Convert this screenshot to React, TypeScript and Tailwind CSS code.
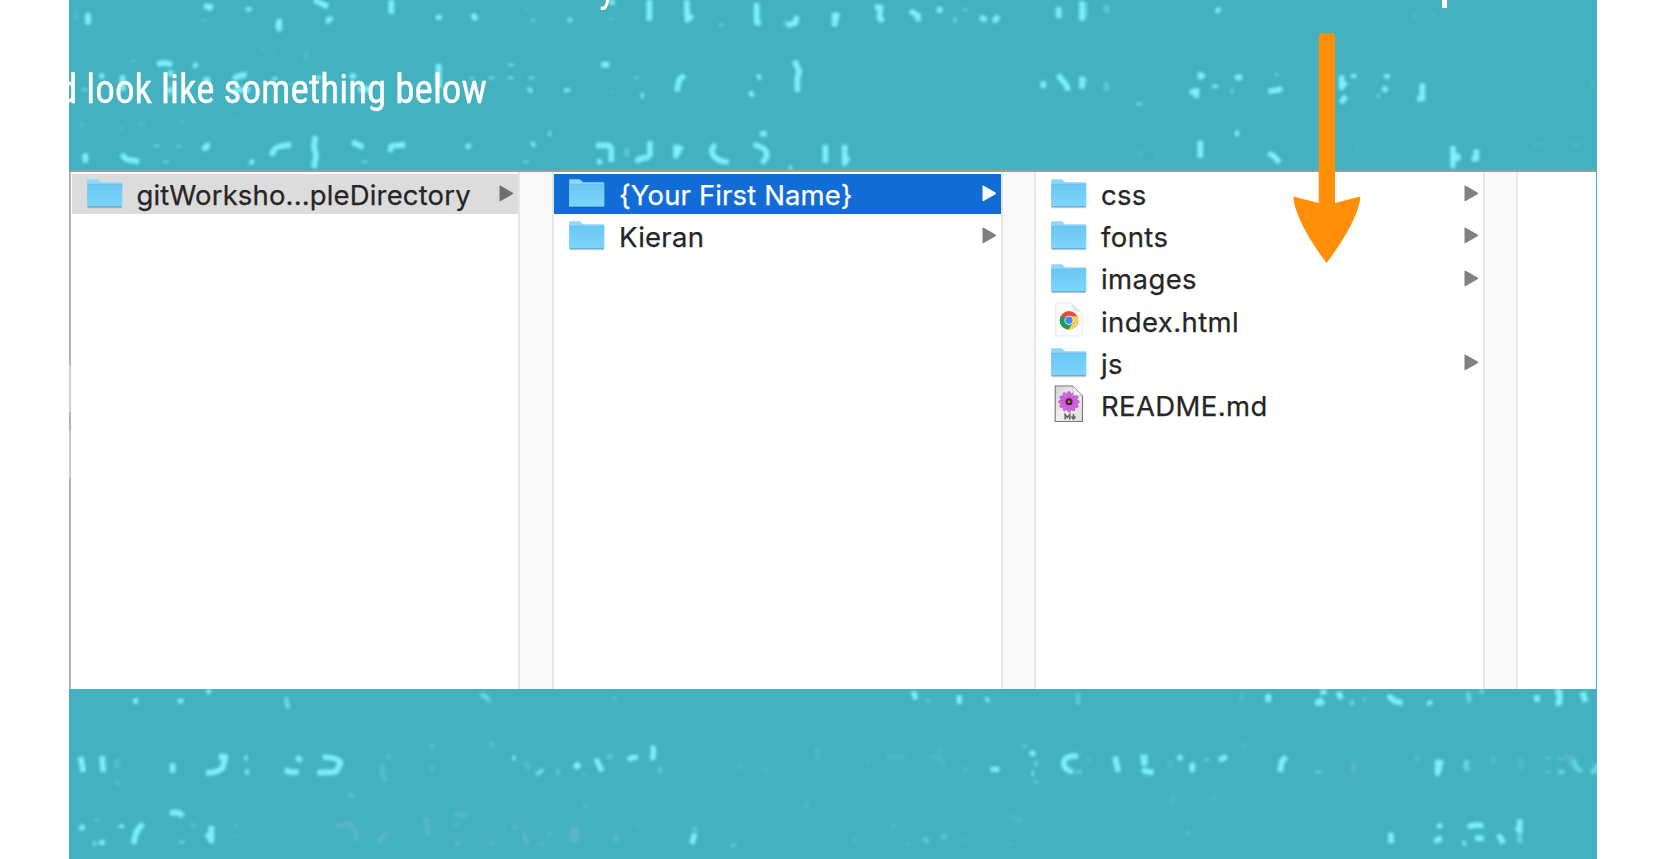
const topMarks = [
  // left part
  { t: "translate(60 0) scale(.33333)", o: 0.95, w: 15, d: "M84 40V74M432 20H452L442 28M433 60v2M566 22V34M652 84L658 64V94M762 0L804 20M797 64Q808 62 814 50M994 0V42M1136 44V60M1238 42L1249 60M1530 58v6M292 192Q315 186 336 194M400 194L412 198M118 228H132M324 220H340M520 238Q540 222 560 226M644 232v8M776 228v10M874 236L884 222M1136 192V264M1352 192v6M1236 232v4M1294 230v6M1352 230v6M1414 230v6M1406 274L1414 266M1518 266L1522 276M188 226V272M330 262V280M430 240H450M520 270H570M895 268H930M76 460V488M186 462Q196 480 208 480L238 484M290 436v4M318 484v4M434 452Q434 436 450 436M570 482L580 490M636 468Q638 442 664 438L694 434M766 408L762 440L768 466L762 504M876 426L910 442M914 484v4M990 456L994 438L1036 434M1220 434L1230 444M1414 436L1424 430M1466 400h6M1398 484v4" },
  { t: "translate(60 0) scale(.33333)", o: 0.4, w: 12, d: "M1396 32h4M1414 58L1424 66M74 262v14M700 246v8M356 434v10M220 180v5" },
  { t: "translate(60 0) scale(.33333)", o: 0.15, w: 12, d: "M740 150L736 182M635 152h6M600 152h10M66 365v20M180 385h12M235 365l20 12M366 360v14M525 352v8M318 396v6M48 30v30" },
  // centre part
  { t: "translate(570 0) scale(.33333)", o: 0.95, w: 15, d: "M126 0V14M238 0V62M350 0L352 60L368 46M560 8V68L572 70M650 76L676 70L680 48M792 80L802 38M794 38V76M914 22H932L928 54L940 64M1020 34L1044 46V64M1112 22L1106 38M1152 60h6M1230 52L1250 60M1270 66L1286 48M1466 22V54M1536 4V62M94 194H118M320 274L328 238L344 226M538 286L550 278M562 234L572 228M674 182L688 216L682 232V276M213 286h8M1420 244V264M1464 224L1492 260V272M1536 230V266M78 436H112Q124 438 124 450V486M82 488L94 482M204 488V478L240 470M240 424V470M318 434V468L334 438M438 434Q422 446 426 458Q434 484 476 486M550 434Q600 444 588 474L576 490M570 402L590 400M658 504h8M766 434V488M824 434V490L834 470" },
  { t: "translate(570 0) scale(.33333)", o: 0.4, w: 12, d: "M454 68v12M124 54v6M200 228v8M124 272v4M170 444v26M1186 24v10M640 70h10M0 50v18M0 270v4" },
  // right part
  { t: "translate(1085 0) scale(.33333)", o: 0.95, w: 15, d: "M394 26L404 36M346 238V224L358 232M314 276H334V294M334 264V294M390 254V264M450 232H472M576 222v4M550 274L582 270L590 262M770 226V262L782 246M806 222V234M768 310L782 288M906 222V236M894 274L906 262M1012 250V296H996M162 308v6M346 422V474M450 400h12M550 460L566 468L584 488M1104 438V504M1118 460V482M1160 476H1174V448" },
  { t: "translate(1085 0) scale(.33333)", o: 0.4, w: 13, d: "M0 10V56M64 14V38M64 246V274M0 232v18M436 274h10M874 288h12" },
  { t: "translate(1085 0) scale(.33333)", o: 0.1, w: 12, d: "M988 40v20M1046 34v14M815 428v30M1345 434h28M1456 434h32M165 450v25M215 460v20M585 182v4M1520 240v20" },
];

const bottomMarks = [
  { t: "translate(60 680) scale(.33333)", o: 0.95, w: 15, d: "M220 64L234 62M362 56V70M440 34h12M62 230L70 276M126 228L130 276M338 250V278M476 230H496L488 264Q468 280 438 278M554 234h8M556 276h10M710 230L724 244M674 270L690 276H716M788 232Q830 230 842 248L828 276L772 278M60 438L72 448M126 480V494M184 434v10M250 432Q222 452 222 492M330 400Q352 392 370 408M366 484v5M454 438V482L440 460M1358 234h8M1548 248L1558 264M1492 276h4" },
  { t: "translate(60 680) scale(.33333)", o: 0.6, w: 12, d: "M678 52L684 86M1262 42L1286 56M1428 284L1450 268M98 490h12M556 236v2" },
  { t: "translate(60 680) scale(.33333)", o: 0.22, w: 14, d: "M172 236v28M172 304v12M1288 186L1302 200M1394 244L1408 266M1286 56v16M968 252Q962 280 978 304M978 232L992 230M865 346h20M1110 200h12M1110 266h12M528 434v8M530 466v5M110 415v12M400 430v15" },
  // centre part
  { t: "translate(570 680) scale(.33333)", o: 0.95, w: 14, d: "M14 264L26 250M78 236L96 274M174 240L188 232H204M242 204H250V232L240 234M1030 34L1038 58M1168 46V72M1248 62L1256 56M1262 268H1288M1382 214L1394 226M1386 280h6M1524 230Q1490 222 1480 248Q1486 276 1510 274M366 492L374 460" },
  { t: "translate(570 680) scale(.33333)", o: 0.4, w: 12, d: "M44 280v5M110 230h18M1364 196v8M1398 300v10M1524 40V74M1076 58v8M1060 474L1076 488M1116 476L1128 464M490 490v12M1516 276h20M270 262v18M1398 240v20M374 440v15" },
  { t: "translate(570 680) scale(.33333)", o: 0.12, w: 14, d: "M200 438h10M44 368v20M574 226v6M512 250v18M586 264v12M888 244h8M950 230h60M1080 230h30L1122 258M1186 260v15M962 438h18M1005 492h14M1320 404L1356 426M1320 486v10M852 470v20M710 365v20M740 200v38M135 45v20M1180 482h12M1110 200v20" },
  // right part
  { t: "translate(1085 680) scale(.33333)", o: 0.95, w: 15, d: "M550 42V66M706 36H724M690 68H710L700 56M758 36L770 56M912 44Q920 66 952 68M1030 64L1038 74M1356 46V66M1410 36H1424V68L1412 70M1492 36L1502 66M90 230L100 276M166 232H188M170 244L186 254M172 268Q186 278 206 276M278 236L292 230M322 248V276M402 240L426 230M586 276L590 244L604 230M700 274v4M1058 240V280L1068 240M918 458V490M1060 432L1068 444M1048 484L1070 474M1150 444Q1160 432 1188 436V444M1170 474H1188V484M1134 492L1142 488M1240 464L1256 490M1304 418V452L1296 440" },
  { t: "translate(1085 680) scale(.33333)", o: 0.55, w: 13, d: "M794 70L808 66M836 58h6M1148 36L1154 66M1184 34h12M1148 240L1142 258L1150 272M366 234v8M1388 232v5M1388 274v4M1424 234v5M1420 276h18M1466 240L1474 264L1490 276M1516 276L1534 272V252M1304 460V490" },
  { t: "translate(1085 680) scale(.33333)", o: 0.15, w: 14, d: "M470 40v25M478 190v16M995 222v24M264 350v18M385 348v10M12 230v15M255 240v24M1308 230v40M1225 225v30M310 450v20" },
];

const paleMarks =
  "M830 436L870 434L888 456V482M980 456Q968 478 954 486M1092 414L1102 424V466M1184 404h40M1184 436h12M1184 490h16M1330 440h8M1290 490h12M1392 458L1402 494M1366 434v12M1446 486v10M1468 456v12M1538 440V486M1550 440V490M1668 460v30M3880 244v34M4510 232h36M4530 240v16";

type MarkGroup = { t: string; o: number; w: number; d: string };

function Marks({ groups, y, pale }: { groups: MarkGroup[]; y: number; pale?: boolean }) {
  return (
    <svg
      className="absolute inset-0 size-full"
      viewBox={`69 ${y} 1528 170`}
      preserveAspectRatio="xMinYMin slice"
      fill="none"
      strokeLinecap="butt"
      strokeLinejoin="round"
      aria-hidden="true"
    >
      <defs>
        <filter id={`soft${y}`} x="0" y={y - 10} width="1665" height="190" filterUnits="userSpaceOnUse">
          <feGaussianBlur stdDeviation="1.35" />
        </filter>
      </defs>
      <g stroke="#7ff3ff" filter={`url(#soft${y})`}>
        {groups.map((g, i) => (
          <path key={i} transform={g.t} d={g.d} strokeWidth={g.w + 2} opacity={g.o} />
        ))}
        {pale && (
          <path transform="translate(60 680) scale(.33333)" d={paleMarks} stroke="#8cc4dc" strokeWidth="15" opacity=".3" />
        )}
      </g>
    </svg>
  );
}

function Folder() {
  return (
    <svg className="h-[30px] w-9" viewBox="0 0 36 30" aria-hidden="true">
      <defs>
        <linearGradient id="folderFront" x2="0" y2="1">
          <stop stopColor="#6bc8f4" />
          <stop offset="1" stopColor="#7dd5fb" />
        </linearGradient>
      </defs>
      <path d="M.6 28.500H35" stroke="#000" strokeOpacity=".18" strokeWidth="1.600" />
      <path d="M.2 27V1.300Q.2.300 1.200.300H10Q11.200.300 12 1.200L13.500 2.700Q14 3.300 15 3.300H34.200Q35.200 3.300 35.200 4.300V27Z" fill="#8ed8f9" />
      <path d="M.2 5.300H35.200V27Q35.200 28 34.200 28H1.200Q.2 28 .2 27Z" fill="url(#folderFront)" />
      <path d="M.2 5.300H35.200" stroke="#62bbe6" strokeWidth=".7" />
      <path d="M.7 27.700H34.700" stroke="#50a8d3" strokeWidth=".9" />
    </svg>
  );
}

function ChromeDoc() {
  return (
    <svg className="mb-[3px] h-[35px] w-9" viewBox="0 0 36 35" aria-hidden="true">
      <path d="M4.800 .8H20L31 11V34H4.800Z" fill="#fdfdfd" stroke="#dedede" strokeWidth=".8" />
      <path d="M20 .8Q22.500 6 21.500 9.500Q26 8.500 31 11Z" fill="#e6e6e6" />
      <circle cx="18" cy="18.300" r="9.200" fill="#e94b3f" />
      <path d="M18 18.300L10 13.700A9.200 9.200 0 0 0 17.500 27.500L22 20.600Z" fill="#16a05d" />
      <path d="M18 14.200H26.200A9.200 9.200 0 0 1 17.500 27.500L22 20.600Z" fill="#fdce48" />
      <circle cx="18" cy="18.300" r="4.500" fill="#f4f6f5" />
      <circle cx="18" cy="18.300" r="3.700" fill="#4688f3" />
    </svg>
  );
}

const petals = [0, 30, 60, 90, 120, 150, 180, 210, 240, 270, 300, 330];

function MarkdownDoc() {
  return (
    <svg className="mb-[2px] h-[38px] w-9" viewBox="0 0 36 38" aria-hidden="true">
      <defs>
        <linearGradient id="docPaper" x2="1" y2="1">
          <stop stopColor="#d4d4d4" />
          <stop offset=".5" stopColor="#efefef" />
          <stop offset="1" stopColor="#dcdcdc" />
        </linearGradient>
      </defs>
      <path d="M4.200 1H21.500L31.500 11V36.500H4.200Z" fill="url(#docPaper)" stroke="#777" strokeWidth="1.100" />
      <g fill="#d863e6" stroke="#9a3bb0" strokeWidth=".4">
        {petals.map((a) => (
          <ellipse key={a} cx="18" cy="10.800" rx="2" ry="4.500" transform={`rotate(${a} 18 16.800)`} />
        ))}
      </g>
      <circle cx="18" cy="16.800" r="3.500" fill="#4f2437" />
      <circle cx="18" cy="16.800" r="1.300" fill="#b38b32" />
      <path d="M21.500 1Q23 7 22 10.500Q27 9.500 31.500 11Z" fill="#f8f8f8" stroke="#aaa" strokeWidth=".5" />
      <path d="M14.200 34.500V29.500L16.500 32.500L18.800 29.500V34.500M22.500 29V33M20.500 31.500L22.500 34L24.500 31.500" stroke="#666" strokeWidth="1.600" fill="none" />
    </svg>
  );
}

type Entry = { name: string; icon?: "chrome" | "md"; state?: "active" | "dim"; track: string };

function Row({ name, icon, state, track }: Entry) {
  const look = state === "active" ? "bg-[#126cd6] text-white" : state === "dim" ? "bg-[#dcdcdc] text-[#262626]" : "text-[#262626]";
  const arrow = state === "active" ? "text-white" : state === "dim" ? "text-[#6f6f6f]" : "text-[#808080]";
  return (
    <div className={`flex h-10 items-center pl-[15px] pr-[4.5px] ${look}`}>
      <span className="flex h-10 w-9 shrink-0 items-center justify-center">
        {icon === "chrome" ? <ChromeDoc /> : icon === "md" ? <MarkdownDoc /> : <Folder />}
      </span>
      <span className={`ml-[14px] whitespace-nowrap pt-[2.4px] text-[27.5px] leading-[37px] [-webkit-text-stroke:0.25px_currentColor] ${track}`}>{name}</span>
      {!icon && (
        <svg className={`mb-px ml-auto h-[17px] w-[15px] ${arrow}`} viewBox="0 0 15 17" fill="currentColor" aria-hidden="true">
          <path d="M.5 1.500Q.5.2 1.700.8L13.500 7.600Q14.700 8.400 13.500 9.200L1.700 16Q.5 16.600 .5 15.300Z" />
        </svg>
      )}
    </div>
  );
}

const columns: Entry[][] = [
  [{ name: "gitWorksho...pleDirectory", state: "dim", track: "tracking-[0.15px]" }],
  [
    { name: "{Your First Name}", state: "active", track: "tracking-[0.13px]" },
    { name: "Kieran", track: "tracking-[0.25px]" },
  ],
  [
    { name: "css", track: "tracking-[0.25px]" },
    { name: "fonts", track: "tracking-[0.4px]" },
    { name: "images", track: "tracking-[0.4px]" },
    { name: "index.html", icon: "chrome", track: "tracking-[0.4px]" },
    { name: "js", track: "tracking-[0.25px]" },
    { name: "README.md", icon: "md", track: "tracking-[0.38px]" },
  ],
];

export default function App() {
  return (
    <div className="flex h-[859px] w-[1665px] overflow-hidden bg-white pl-[69px] pr-[68px]">
      <main className="relative flex w-[1528px] flex-col bg-[#43b1bf]">
        <header className="relative h-[170px] shrink-0 overflow-hidden">
          <Marks groups={topMarks} y={0} />
          <p className="absolute -left-[11px] top-[63px] origin-left scale-x-[.953] whitespace-nowrap font-['Roboto_Condensed','Roboto',sans-serif] text-[41px] leading-[52px] text-white [-webkit-text-stroke:0.3px_white]">
            d look like something below
          </p>
          <span className="absolute left-[530px] -top-[38px] font-['Roboto_Condensed','Roboto',sans-serif] text-[41px] leading-[52px] text-white">y</span>
          <span className="absolute left-[1373px] top-0 h-2 w-[5px] bg-white" />
        </header>
        <section className="mr-px flex h-[519px] shrink-0 border-t-2 border-t-[#9c9c9c] bg-white font-['Inter',sans-serif]">
          <div className="flex w-0.5 shrink-0 flex-col bg-[#b5b5b5] pt-[193px]">
            <div className="h-[47px] bg-[#d0d0d0]" />
            <div className="mt-[19px] h-[47px] bg-[#cdcdcd]" />
          </div>
          {columns.map((rows, i) => (
            <div key={i} className="flex h-full shrink-0">
              <div className={`flex w-[447px] flex-col gap-[2.3px] pt-[2px] ${i === 0 ? "pl-[0.5px]" : ""}`}>
                {rows.map((r) => (
                  <Row key={r.name} {...r} />
                ))}
              </div>
              <div className={`border-l-2 border-r-2 border-[#e6e6e6] bg-[#f9f9f9] ${i === 0 ? "w-9" : "w-[35px]"}`} />
            </div>
          ))}
        </section>
        <footer className="relative h-[170px] overflow-hidden">
          <Marks groups={bottomMarks} y={689} pale />
        </footer>
        <svg className="absolute left-[1224px] top-[33px] h-[231px] w-[68px]" viewBox="0 0 68 231" fill="#ff8f08" aria-label="Arrow">
          <path d="M25.700 4Q25.700 .3 29.500 .3H38Q42 .3 42 4V170L67.300 163.500C67 181 48 211 33.700 230C19 211 .8 181 .4 163.500L25.700 170Z" />
        </svg>
      </main>
    </div>
  );
}
